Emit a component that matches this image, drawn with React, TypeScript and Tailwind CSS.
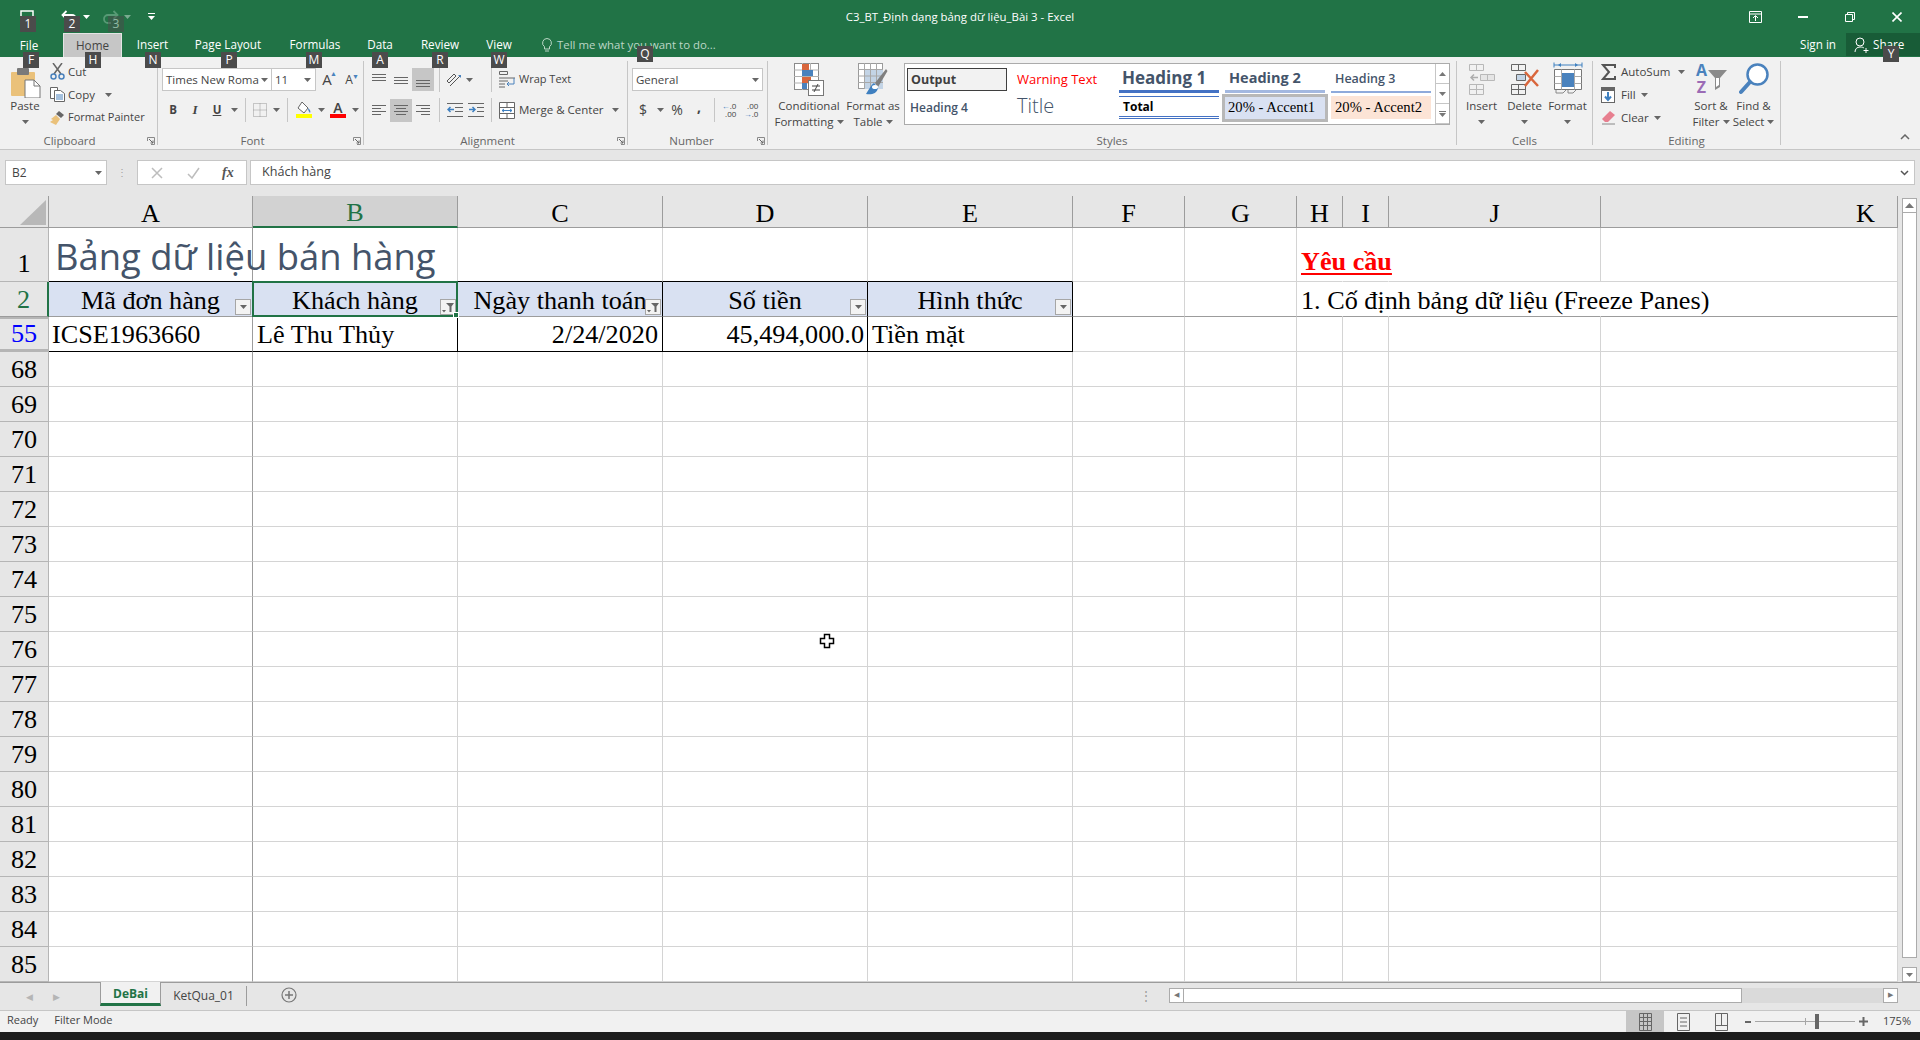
import React from 'react';

const serif = "font-['Liberation_Serif',serif]";

const tabs = [
  { label: 'File', cls: 'w-[58px] pt-[1px]' },
  { label: 'Home', cls: 'w-[59px] ml-[5px] bg-[#c6c6c6] text-[#444] border-t border-x border-[#e4e4e4]' },
  { label: 'Insert', cls: 'w-[61px]' },
  { label: 'Page Layout', cls: 'w-[90px]' },
  { label: 'Formulas', cls: 'w-[84px]' },
  { label: 'Data', cls: 'w-[46px]' },
  { label: 'Review', cls: 'w-[74px]' },
  { label: 'View', cls: 'w-[44px]' },
];

const keytips = [
  { t: '1', cls: 'left-[20px] top-[16px]' },
  { t: '2', cls: 'left-[64px] top-[16px]' },
  { t: '3', cls: 'left-[108px] top-[16px] opacity-50' },
  { t: 'F', cls: 'left-[23px] top-[52px]' },
  { t: 'H', cls: 'left-[85px] top-[52px]' },
  { t: 'N', cls: 'left-[145px] top-[52px]' },
  { t: 'P', cls: 'left-[221px] top-[52px]' },
  { t: 'M', cls: 'left-[306px] top-[52px]' },
  { t: 'A', cls: 'left-[372px] top-[52px]' },
  { t: 'R', cls: 'left-[432px] top-[52px]' },
  { t: 'W', cls: 'left-[491px] top-[52px]' },
  { t: 'Q', cls: 'left-[637px] top-[46px]' },
  { t: 'Y', cls: 'left-[1883px] top-[46px]' },
];

const Caret = ({ color = '#666' }: { color?: string }) => (
  <svg width="7" height="4" viewBox="0 0 7 4" className="shrink-0">
    <path d="M0 0h7L3.5 4z" fill={color} />
  </svg>
);

const Launcher = () => (
  <svg width="8" height="8" viewBox="0 0 8 8" className="absolute right-[2px] bottom-[0px]">
    <path d="M.5 4V.5H7.5V7.5H4" fill="none" stroke="#8a8a8a" />
    <path d="M2 2l4 4M3.5 6H6V3.5" fill="none" stroke="#666" />
  </svg>
);

const Group = ({ w, label, labelCls = '', launcher, children }: { w: string; label: string; labelCls?: string; launcher?: boolean; children: React.ReactNode }) => (
  <div className={`${w} shrink-0 h-[84px] border-r border-[#c6c6c6] flex flex-col relative`}>
    <div className="h-[73px] shrink-0">{children}</div>
    <div className={`text-center text-[11.5px] leading-[13px] text-[#666] ${labelCls}`}>{label}</div>
    {launcher && <Launcher />}
  </div>
);

const Slot = ({ w, on, children }: { w: string; on?: boolean; children?: React.ReactNode }) => (
  <div className={`${w} h-[23px] shrink-0 flex items-center justify-center ${on ? 'bg-[#c6c6c6]' : ''}`}>{children}</div>
);

const Sep = () => <div className="w-px h-[24px] bg-[#c6c6c6]" />;

const AlignIcon = ({ rows, y }: { rows: [number, number][]; y: number }) => (
  <svg width="14" height="14" viewBox="0 0 14 14">
    {rows.map(([x, w], i) => (
      <rect key={i} x={x} y={y + i * 3} width={w} height="1" fill="#666" />
    ))}
  </svg>
);

const BigBtn = ({ w, icon, l1, l2, caretLine = 2 }: { w: string; icon: React.ReactNode; l1: string; l2?: string; caretLine?: number }) => (
  <div className={`${w} shrink-0 flex flex-col items-center text-[#444] text-[11.5px]`}>
    <div className="h-[37px] flex items-end justify-center pb-[2px]">{icon}</div>
    <div className="h-[16px] leading-[16px] whitespace-nowrap">{l1}</div>
    <div className="h-[16px] leading-[16px] flex items-center gap-[3px] whitespace-nowrap">
      {l2}
      {caretLine === 2 && <Caret />}
    </div>
  </div>
);

const CondIcon = () => (
  <svg width="30" height="33" viewBox="0 0 30 33">
    <rect x=".5" y=".5" width="24" height="26" fill="#fff" stroke="#8a8a8a" />
    <path d="M8.5 0v27M16.5 0v27M0 7h25M0 13.5h25M0 20h25" stroke="#b0b0b0" />
    <rect x="8" y="1" width="7" height="6" fill="#d9663c" />
    <rect x="8" y="7" width="11" height="6" fill="#4a82bd" />
    <rect x="8" y="14" width="9" height="6" fill="#d9663c" />
    <rect x="8" y="20" width="5" height="6" fill="#4a82bd" />
    <rect x="14.5" y="17.5" width="15" height="15" fill="#fff" stroke="#777" />
    <path d="M18 23h8M18 27h8M24 21l-4 8" stroke="#444" fill="none" />
  </svg>
);

const TableIcon = () => (
  <svg width="30" height="33" viewBox="0 0 30 33">
    <rect x=".5" y=".5" width="24" height="25" fill="#fff" stroke="#9a9a9a" />
    <rect x="6" y="7" width="19" height="19" fill="#c3d4e6" />
    <path d="M6.5 0v26M12.5 0v26M18.5 0v26M0 6.5h25M0 13h25M0 19.5h25" stroke="#a8a8a8" />
    <path d="M17 20l11-14 1.5 2L20 24z" fill="#7f7f7f" />
    <path d="M16 20c-3 2-5 6-8 11 5 1 11 0 12-6z" fill="#3f80c0" />
    <ellipse cx="17" cy="24" rx="3" ry="2" fill="#fff" />
  </svg>
);

const InsertIcon = () => (
  <svg width="28" height="32" viewBox="0 0 28 32" opacity=".55">
    <path d="M1.500 .5h14v6h-14zM8.500 .5v6" fill="none" stroke="#8a8a8a" />
    <path d="M1.500 20.500h14v10h-14zM8.500 20.500v10M1.500 25.500h14" fill="none" stroke="#8a8a8a" />
    <path d="M12.500 10.500h14v6h-14zM19.500 10.500v6" fill="#ddd" stroke="#8a8a8a" />
    <path d="M10 13.500H3M6 10.500l-3 3 3 3" fill="none" stroke="#777" strokeWidth="1.500" />
  </svg>
);

const DeleteIcon = () => (
  <svg width="30" height="32" viewBox="0 0 30 32">
    <path d="M1.500 .5h14v6h-14zM8.500 .5v6M1.500 20.500h14v10h-14zM8.500 20.500v10M1.500 25.500h14" fill="none" stroke="#666" />
    <path d="M6.500 10.500h9v6h-9z" fill="#c3d4e6" stroke="#666" />
    <path d="M15 8l13 14M28 6L15 22" stroke="#d9663c" strokeWidth="2.500" fill="none" />
  </svg>
);

const FormatIcon = () => (
  <svg width="30" height="34" viewBox="0 0 30 34">
    <path d="M1 3h28M1 .5v5M29 .5v5" stroke="#3f80c0" fill="none" />
    <path d="M5 3l3-2v4zM25 3l-3-2v4z" fill="#3f80c0" />
    <path d="M1.500 7.500h27v20h-27z" fill="#fff" stroke="#777" />
    <path d="M8.500 7.500v20M21.500 7.500v20M1.500 14.500h27M1.500 21.500h27" stroke="#aaa" fill="none" />
    <rect x="9" y="11" width="12" height="14" fill="#4a82bd" />
    <path d="M3 28v3h7l3-3M15 28v3h5l3-3" fill="none" stroke="#888" />
  </svg>
);

const SortIcon = () => (
  <div className="flex items-center w-[32px] h-[34px]">
    <div className="w-[13px] flex flex-col items-center text-[16px] leading-[17px] font-bold">
      <span className="text-[#4a82bd]">A</span>
      <span className="text-[#9b6bb5]">Z</span>
    </div>
    <svg width="19" height="22" viewBox="0 0 19 22" className="mt-[2px]">
      <path d="M0 1h19l-7 8v9l-5 3V9z" fill="#8a8a8a" />
      <path d="M8 9v9l3-2V9z" fill="#fff" />
    </svg>
  </div>
);

const FindIcon = () => (
  <svg width="30" height="34" viewBox="0 0 30 34">
    <circle cx="18.500" cy="12.500" r="10" fill="#fff" stroke="#4a82bd" strokeWidth="2.500" />
    <path d="M11 20L2 30" stroke="#4a82bd" strokeWidth="4" strokeLinecap="round" />
  </svg>
);

const StyleCell = ({ cls, children }: { cls: string; children: React.ReactNode }) => (
  <div className={`w-[100px] whitespace-nowrap ${cls}`}>{children}</div>
);

const StyleRow = ({ cls = 'h-[30px]', children }: { cls?: string; children: React.ReactNode }) => (
  <div className={`${cls} flex gap-[6px] items-center`}>{children}</div>
);

const Ribbon = () => (
  <div className="h-[93px] bg-[#f1f1f1] border-b border-[#c6c6c6] pt-[4px] flex text-[#444] text-[11.5px]">
    <Group w="w-[158px]" label="Clipboard" labelCls="pr-[18px]" launcher>
      <div className="flex">
        <div className="w-[50px] flex flex-col items-center">
          <div className="h-[37px] flex items-end pl-[1px]">
            <svg width="30" height="30" viewBox="0 0 30 30">
              <rect x="0" y="4" width="24" height="24" rx="1" fill="#eac17a" />
              <rect x="6" y="0" width="12" height="7" rx="1" fill="#7a7a7a" />
              <path d="M14 12h9l6 6v12H14z" fill="#fff" stroke="#777" />
              <path d="M23 12v6h6" fill="none" stroke="#777" />
            </svg>
          </div>
          <div className="h-[16px] mt-[0px] leading-[16px]">Paste</div>
          <div className="h-[16px] flex items-center"><Caret /></div>
        </div>
        <div className="flex flex-col">
          <div className="h-[23px] mt-[-1px] flex items-center gap-[3px]">
            <svg width="15" height="17" viewBox="0 0 15 17">
              <path d="M3 0l8 11M12 0L4 11" stroke="#666" strokeWidth="1.500" />
              <circle cx="3.500" cy="13.500" r="2.500" fill="none" stroke="#4a82bd" strokeWidth="1.500" />
              <circle cx="11.500" cy="13.500" r="2.500" fill="none" stroke="#4a82bd" strokeWidth="1.500" />
            </svg>
            Cut
          </div>
          <div className="h-[23px] flex items-center gap-[3px]">
            <svg width="15" height="15" viewBox="0 0 15 15">
              <path d="M.5.5h7l0 11H.5z" fill="#fff" stroke="#666" />
              <path d="M4.500 3.500h6l4 3v8h-10z" fill="#fff" stroke="#666" />
              <path d="M6 8h7M6 10h7M6 12h7" stroke="#4a82bd" />
            </svg>
            <span>Copy</span>
            <span className="ml-[7px]"><Caret /></span>
          </div>
          <div className="h-[23px] flex items-center gap-[3px] whitespace-nowrap text-[11px]">
            <svg width="15" height="16" viewBox="0 0 15 16">
              <path d="M9 1l5 4-3 3-5-4z" fill="#666" />
              <path d="M6 5l4 4-4 6-6-3 3-2-2-1z" fill="#eac17a" />
            </svg>
            Format Painter
          </div>
        </div>
      </div>
    </Group>

    <Group w="w-[206px]" label="Font" labelCls="pr-[16px]" launcher>
      <div className="pt-[7px] pl-[4px]">
        <div className="flex items-center h-[23px]">
          <div className="w-[110px] h-[23px] bg-white border border-[#c6c6c6] flex items-center justify-between px-[3px] text-[11.5px] whitespace-nowrap overflow-hidden">
            Times New Roma<Caret />
          </div>
          <div className="w-[44px] h-[23px] bg-white border border-l-0 border-[#c6c6c6] flex items-center justify-between px-[3px] pr-[4px]">
            11<Caret />
          </div>
          <div className="w-[22px] text-center text-[15px] relative">
            A<span className="text-[#4a82bd] text-[7px] absolute top-[1px] right-[1px]">▲</span>
          </div>
          <div className="w-[22px] text-center text-[12px] relative">
            A<span className="text-[#4a82bd] text-[7px] absolute top-[1px] right-[1px]">▼</span>
          </div>
        </div>
        <div className="flex items-center mt-[7px]">
          <Slot w="w-[22px]"><b className="font-bold">B</b></Slot>
          <Slot w="w-[22px]"><i className={`${serif} text-[13px] font-bold`}>I</i></Slot>
          <Slot w="w-[22px]"><b className="underline font-bold">U</b></Slot>
          <Slot w="w-[12px]"><Caret /></Slot>
          <Slot w="w-[10px]"><Sep /></Slot>
          <Slot w="w-[20px]">
            <svg width="14" height="14" viewBox="0 0 14 14">
              <path d="M.5.5h13v13H.5zM7 .5v13M.5 7h13" fill="none" stroke="#999" strokeDasharray="1 1" />
            </svg>
          </Slot>
          <Slot w="w-[12px]"><Caret /></Slot>
          <Slot w="w-[10px]"><Sep /></Slot>
          <Slot w="w-[24px]">
            <svg width="16" height="17" viewBox="0 0 16 17">
              <path d="M6 1l6 6-4 5-6-5z" fill="#fff" stroke="#666" />
              <path d="M12 7c2 2 3 3 2 5-1-1-2-3-2-5z" fill="#4a82bd" />
              <rect y="13" width="16" height="4" fill="#ffff00" />
            </svg>
          </Slot>
          <Slot w="w-[10px]"><Caret /></Slot>
          <Slot w="w-[24px]">
            <div className="flex flex-col items-center leading-[13px] font-semibold text-[14px]">
              A<div className="w-[16px] h-[4px] bg-[#ff0000]" />
            </div>
          </Slot>
          <Slot w="w-[10px]"><Caret /></Slot>
        </div>
      </div>
    </Group>

    <Group w="w-[264px]" label="Alignment" labelCls="pr-[16px]" launcher>
      <div className="pt-[7px] pl-[4px]">
        <div className="flex items-center h-[23px]">
          <Slot w="w-[22px]"><AlignIcon rows={[[0, 14], [0, 14], [0, 14]]} y={1} /></Slot>
          <Slot w="w-[22px]"><AlignIcon rows={[[0, 14], [0, 14], [0, 14]]} y={4} /></Slot>
          <Slot w="w-[22px]" on><AlignIcon rows={[[0, 14], [0, 14], [0, 14]]} y={7} /></Slot>
          <Slot w="w-[10px]"><Sep /></Slot>
          <Slot w="w-[20px]">
            <svg width="16" height="14" viewBox="0 0 16 14">
              <path d="M1 8l7-7 2 2-7 7zM4 13L14 3" fill="none" stroke="#555" />
              <path d="M12 2h3v3z" fill="#4a82bd" />
            </svg>
          </Slot>
          <Slot w="w-[10px]"><Caret /></Slot>
          <div className="ml-[17px] mr-[7px]"><Sep /></div>
          <svg width="16" height="18" viewBox="0 0 16 18" className="shrink-0">
            <path d="M.5.5h8v3h-8zM0 7h16M0 10h9M0 13h6M0 16h6" fill="none" stroke="#666" />
            <path d="M15 7v6H8M10 11l-2 2 2 2" fill="none" stroke="#4a82bd" />
          </svg>
          <span className="ml-[4px] whitespace-nowrap text-[11px]">Wrap Text</span>
        </div>
        <div className="flex items-center mt-[7px]">
          <Slot w="w-[22px]"><AlignIcon rows={[[0, 14], [0, 9], [0, 14], [0, 9]]} y={2} /></Slot>
          <Slot w="w-[22px]" on><AlignIcon rows={[[0, 14], [2, 10], [0, 14], [2, 10]]} y={2} /></Slot>
          <Slot w="w-[22px]"><AlignIcon rows={[[0, 14], [5, 9], [0, 14], [5, 9]]} y={2} /></Slot>
          <Slot w="w-[10px]"><Sep /></Slot>
          <Slot w="w-[21px]">
            <svg width="16" height="14" viewBox="0 0 16 14">
              <path d="M0 .5h16M8 4.500h8M8 8.500h8M0 13.500h16" stroke="#666" />
              <path d="M7 6.500H1M3.500 4L1 6.500 3.500 9" fill="none" stroke="#3f80c0" strokeWidth="1.500" />
            </svg>
          </Slot>
          <Slot w="w-[22px]">
            <svg width="16" height="14" viewBox="0 0 16 14">
              <path d="M0 .5h16M9 4.500h7M9 8.500h7M0 13.500h16" stroke="#666" />
              <path d="M1 6.500h6M4.500 4L7 6.500 4.500 9" fill="none" stroke="#3f80c0" strokeWidth="1.500" />
            </svg>
          </Slot>
          <div className="ml-[4px] mr-[7px]"><Sep /></div>
          <svg width="16" height="17" viewBox="0 0 16 17" className="shrink-0">
            <path d="M.5.5h15v16H.5zM.5 5.500h15M.5 11.500h15M8 .5v5M8 11.500v5" fill="#fff" stroke="#666" />
            <path d="M3 8.500h10M5 7L3 8.500 5 10M11 7l2 1.500L11 10" fill="none" stroke="#3f80c0" />
          </svg>
          <span className="ml-[4px] whitespace-nowrap">Merge &amp; Center</span>
          <span className="ml-[8px]"><Caret /></span>
        </div>
      </div>
    </Group>

    <Group w="w-[140px]" label="Number" labelCls="pr-[12px]" launcher>
      <div className="pt-[7px] pl-[4px]">
        <div className="w-[131px] h-[23px] bg-white border border-[#c6c6c6] flex items-center justify-between px-[3px]">
          General<Caret />
        </div>
        <div className="flex items-center mt-[7px] text-[14px]">
          <Slot w="w-[22px]">$</Slot>
          <Slot w="w-[12px]"><Caret /></Slot>
          <Slot w="w-[22px]">%</Slot>
          <Slot w="w-[22px]"><b className="-mt-[7px]">,</b></Slot>
          <Slot w="w-[8px]"><Sep /></Slot>
          <Slot w="w-[22px]">
            <div className="flex flex-col text-[8px] leading-[8px] items-end">
              <span><span className="text-[#3f80c0]">←</span>.0</span><span>.00</span>
            </div>
          </Slot>
          <Slot w="w-[22px]">
            <div className="flex flex-col text-[8px] leading-[8px] items-end">
              <span>.00</span><span><span className="text-[#3f80c0]">→</span>.0</span>
            </div>
          </Slot>
        </div>
      </div>
    </Group>

    <Group w="w-[689px]" label="Styles">
      <div className="flex pl-[8px]">
        <BigBtn w="w-[66px]" icon={<CondIcon />} l1="Conditional" l2="Formatting" />
        <BigBtn w="w-[62px]" icon={<TableIcon />} l1="Format as" l2="Table" />
        <div className="mt-[2px] w-[546px] h-[62px] bg-white border border-[#ababab] flex pl-[2px]">
          <div className="w-[528px] shrink-0">
            <StyleRow>
              <StyleCell cls="h-[23px] mt-[1px] border border-[#3f3f3f] bg-[#f2f2f2] px-[3px] text-[12.5px] leading-[21px] font-bold text-[#3f3f3f]">Output</StyleCell>
              <StyleCell cls="px-[4px] text-[13px] text-[#ff0000] mt-[1px]">Warning Text</StyleCell>
              <StyleCell cls="h-[27px] border-b-[3px] border-[#4472c4] text-[17px] leading-[24px] font-bold text-[#44546a] px-[3px]">Heading 1</StyleCell>
              <StyleCell cls="h-[27px] border-b-[3px] border-[#a3b8e0] text-[14.5px] leading-[24px] font-bold text-[#44546a] px-[4px]">Heading 2</StyleCell>
              <StyleCell cls="h-[27px] border-b-[2px] border-[#8eaadb] text-[12.5px] leading-[26px] font-semibold text-[#44546a] px-[4px]">Heading 3</StyleCell>
            </StyleRow>
            <StyleRow cls="h-[29px] -mt-[1px]">
              <StyleCell cls="px-[3px] text-[12px] font-semibold text-[#44546a]">Heading 4</StyleCell>
              <StyleCell cls="px-[4px] text-[20px] font-light leading-[26px] -mt-[3px] text-[#44546a]">Title</StyleCell>
              <StyleCell cls="h-[23px] border-t border-b-[3px] border-b-[#4472c4] [border-bottom-style:double] border-t-[#4472c4] px-[4px] text-[12px] font-bold text-black leading-[20px]">Total</StyleCell>
              <div className={`w-[106px] -mx-[3px] h-[28px] border-[3px] border-[#b8b8b8] bg-[#d9e1f2] text-[14.670px] text-black pl-[3px] leading-[21px] whitespace-nowrap ${serif}`}>20% - Accent1</div>
              <StyleCell cls={`h-[23px] bg-[#fce4d6] px-[4px] text-[14.670px] text-black leading-[22px] ${serif}`}>20% - Accent2</StyleCell>
            </StyleRow>
          </div>
          <div className="w-[14px] shrink-0 flex flex-col">
            {[0, 1, 2].map((i) => (
              <div key={i} className="h-[20px] border-l border-b border-[#c6c6c6] flex flex-col items-center justify-center gap-[1px]">
                {i === 0 ? <svg width="7" height="4" viewBox="0 0 7 4"><path d="M3.500 0L7 4H0z" fill="#777" /></svg> : <Caret color="#777" />}
                {i === 2 && <div className="w-[7px] h-px bg-[#777] -order-1" />}
              </div>
            ))}
          </div>
        </div>
      </div>
    </Group>

    <Group w="w-[136px]" label="Cells">
      <div className="flex pl-[3px]">
        {[
          { l: 'Insert', i: <InsertIcon /> },
          { l: 'Delete', i: <DeleteIcon /> },
          { l: 'Format', i: <FormatIcon /> },
        ].map((b) => (
          <BigBtn key={b.l} w="w-[43px]" icon={b.i} l1={b.l} />
        ))}
      </div>
    </Group>

    <Group w="w-[188px]" label="Editing">
      <div className="flex pl-[8px]">
        <div className="w-[89px] shrink-0 flex flex-col -mt-[1px]">
          <div className="h-[23px] flex items-center gap-[5px]">
            <svg width="15" height="16" viewBox="0 0 15 16"><path d="M14 4V1H2l6 7-6 7h12v-3" fill="none" stroke="#555" strokeWidth="2" /></svg>
            AutoSum
            <span className="ml-[3px]"><Caret /></span>
          </div>
          <div className="h-[23px] flex items-center gap-[5px]">
            <svg width="15" height="16" viewBox="0 0 15 16">
              <rect x=".5" y=".5" width="13" height="15" fill="#fff" stroke="#666" />
              <rect x="1" y="1" width="12" height="3" fill="#666" />
              <path d="M7 5v8M4 9.500L7 13l3-3.500" fill="none" stroke="#3f80c0" strokeWidth="2" />
            </svg>
            Fill<Caret />
          </div>
          <div className="h-[23px] flex items-center gap-[5px]">
            <svg width="15" height="15" viewBox="0 0 15 15">
              <path d="M9 1l5 4-7 7H4L1 9z" fill="#e77f8f" />
              <path d="M1 14h13" stroke="#888" />
            </svg>
            Clear<Caret />
          </div>
        </div>
        <BigBtn w="w-[42px]" icon={<SortIcon />} l1="Sort &" l2="Filter" />
        <BigBtn w="w-[43px]" icon={<FindIcon />} l1="Find &" l2="Select" />
      </div>
    </Group>

    <div className="flex-1 flex items-end justify-end pr-[10px] pb-[5px] h-[84px]">
      <svg width="10" height="6" viewBox="0 0 10 6"><path d="M1 5l4-4 4 4" fill="none" stroke="#666" strokeWidth="1.500" /></svg>
    </div>
  </div>
);

const TitleBar = () => (
  <div className="h-[57px] bg-[#217346] text-white relative">
    <div className="h-[33px] grid grid-cols-[1fr_auto_1fr] items-center">
      <div className="flex items-center pl-[20px]">
        <svg width="14" height="14" viewBox="0 0 14 14"><path d="M1 1h12v12H1z" fill="none" stroke="#fff" strokeWidth="1.500" /></svg>
        <svg width="18" height="14" viewBox="0 0 18 14" className="ml-[27px]">
          <path d="M2 5h9a4 4 0 010 8H8M5.500 1L1.500 5l4 4" fill="none" stroke="#fff" strokeWidth="1.800" />
        </svg>
        <span className="ml-[4px]"><Caret color="#fff" /></span>
        <svg width="18" height="14" viewBox="0 0 18 14" className="ml-[11px] opacity-40">
          <path d="M16 5H7a4 4 0 000 8h3M12.500 1l4 4-4 4" fill="none" stroke="#a9d4bb" strokeWidth="1.800" />
        </svg>
        <span className="ml-[5px] opacity-40"><Caret color="#fff" /></span>
        <svg width="7" height="7" viewBox="0 0 7 7" className="ml-[17px]"><path d="M0 0h7v1H0zM0 3h7L3.500 7z" fill="#fff" /></svg>
      </div>
      <div className="text-[11.4px] whitespace-nowrap">C3_BT_Định dạng bảng dữ liệu_Bài 3 - Excel</div>
      <div className="flex items-center justify-end">
        <svg width="13" height="12" viewBox="0 0 13 12"><path d="M.5.5h12v11H.5zM.5 3h12M6.500 10V5M4 7l2.500-2.500L9 7" fill="none" stroke="#fff" /></svg>
        <svg width="10" height="2" viewBox="0 0 10 2" className="ml-[36px]"><rect width="10" height="2" fill="#fff" /></svg>
        <svg width="10" height="10" viewBox="0 0 10 10" className="ml-[37px]"><path d="M.5 2.500h7v7h-7zM2.500 2.500v-2h7v7h-2" fill="none" stroke="#fff" /></svg>
        <svg width="10" height="10" viewBox="0 0 10 10" className="ml-[37px] mr-[18px]"><path d="M.5.5l9 9M9.500.5l-9 9" stroke="#fff" strokeWidth="1.600" /></svg>
      </div>
    </div>
    <div className="h-[24px] flex items-stretch text-[11.700px]">
      {tabs.map((t) => (
        <div key={t.label} className={`${t.cls} flex items-center justify-center whitespace-nowrap`}>{t.label}</div>
      ))}
      <div className="flex items-center ml-[20px] text-[#bcd7c7] text-[11.4px]">
        <svg width="10" height="15" viewBox="0 0 10 15" className="mr-[5px] ml-[1px]">
          <path d="M5 .5a4.500 4.500 0 012.500 8.200V11h-5V8.700A4.500 4.500 0 015 .5zM3 13h4" fill="none" stroke="#bcd7c7" />
        </svg>
        Tell me what you want to do...
      </div>
      <div className="flex-1" />
      <div className="flex items-center mr-[10px]">Sign in</div>
      <div className="w-[74px] bg-[#185c37] flex items-center pl-[8px] gap-[4px] mb-[1px]">
        <svg width="15" height="16" viewBox="0 0 15 16"><path d="M6 1a3.500 3.500 0 110 8 3.500 3.500 0 010-8zM1 15c0-3 2-5 5-5s3 .5 4 1M9.500 13.500h5M12 11v5" fill="none" stroke="#fff" /></svg>
        Share
      </div>
    </div>
  </div>
);

const FormulaBar = () => (
  <div className="h-[46px] bg-[#e6e6e6] pt-[10px] flex items-start text-[12px] text-[#444]">
    <div className="ml-[5px] w-[102px] h-[25px] bg-white border border-[#c6c6c6] flex items-center justify-between pl-[6px] pr-[4px]">
      B2<Caret />
    </div>
    <div className="w-[30px] h-[25px] flex items-center justify-center text-[#a0a0a0] text-[10px]">⋮</div>
    <div className="w-[110px] h-[25px] bg-white border border-[#c6c6c6] flex items-center">
      <svg width="12" height="12" viewBox="0 0 12 12" className="ml-[13px]"><path d="M1 1l10 10M11 1L1 11" stroke="#bdbdbd" strokeWidth="1.500" /></svg>
      <svg width="13" height="12" viewBox="0 0 13 12" className="ml-[24px]"><path d="M1 7l4 4 7-10" fill="none" stroke="#bdbdbd" strokeWidth="1.500" /></svg>
      <i className={`ml-[22px] text-[14px] font-bold text-[#555] ${serif}`}>fx</i>
    </div>
    <div className="ml-[3px] w-[1665px] h-[25px] bg-white border border-[#c6c6c6] flex items-center justify-between pl-[11px] pr-[5px] text-[12.6px]">
      Khách hàng
      <svg width="9" height="6" viewBox="0 0 9 6"><path d="M1 1l3.500 3.500L8 1" fill="none" stroke="#555" strokeWidth="1.500" /></svg>
    </div>
  </div>
);

const cols = ['A', 'B', 'C', 'D', 'E', 'F', 'G', 'H', 'I', 'J', 'K'];

const FilterBtn = ({ active }: { active?: boolean }) => (
  <div className="absolute right-[1px] bottom-[1px] w-[16px] h-[16px] bg-[#f3f3f3] border border-[#a6a6a6] flex items-center justify-center z-10">
    {active ? (
      <svg width="12" height="11" viewBox="0 0 12 11">
        <path d="M4 1h8L9.500 4.500V10H7.500V4.500z" fill="#666" />
        <path d="M0 8h4L2 10.500z" fill="#666" />
      </svg>
    ) : (
      <Caret color="#666" />
    )}
  </div>
);

const RowHead = ({ n, cls = 'leading-[33px]' }: { n: number; cls?: string }) => (
  <div className={`bg-[#e6e6e6] border-r border-b border-[#b5b5b5] flex items-end justify-center ${cls}`}>{n}</div>
);

const Cell = ({ cls = '', children }: { cls?: string; children?: React.ReactNode }) => (
  <div className={`relative border-r border-b border-[#d4d4d4] flex items-end whitespace-nowrap leading-[31px] ${cls}`}>{children}</div>
);

const blankRows = Array.from({ length: 18 }, (_, i) => 68 + i);

const Sheet = () => (
  <div className={`flex h-[786px] bg-[#e6e6e6] text-[26.200px] text-black ${serif}`}>
    <div className="w-[1898px] bg-white grid grid-cols-[49px_204px_205px_205px_205px_205px_112px_112px_46px_46px_212px_297px] grid-rows-[32px_54px_35px_35px_repeat(18,35px)]">
      <div className="bg-[#e6e6e6] border-r border-b border-[#9c9c9c] flex items-end justify-end p-[2px]">
        <svg width="26" height="25" viewBox="0 0 26 25"><path d="M26 0v25H0z" fill="#b8b8b8" /></svg>
      </div>
      {cols.map((c) => (
        <div
          key={c}
          className={`flex items-center pt-[4px] border-r border-b border-[#9c9c9c] ${
            c === 'K' ? 'justify-end pr-[22px]' : 'justify-center'
          } ${c === 'B' ? 'bg-[#d2d2d2] text-[#217346] border-b-2 border-b-[#217346]' : 'bg-[#e6e6e6]'}`}
        >
          {c}
        </div>
      ))}

      <RowHead n={1} cls="leading-[35px]" />
      <Cell cls="border-b-black border-r-[#9c9c9c]">
        <span className="pl-[6px] font-['Open_Sans',sans-serif] font-normal text-[36.400px] leading-[49px] text-[#44546a] relative">Bảng dữ liệu bán hàng</span>
      </Cell>
      <Cell cls="border-b-black" />
      <Cell cls="border-b-black" />
      <Cell cls="border-b-black" />
      <Cell cls="border-b-black" />
      <Cell />
      <Cell />
      <Cell cls="border-r-transparent">
        <span className="pl-[4px] font-bold text-[#ff0000] underline decoration-2 underline-offset-[3px] leading-[38px]">Yêu cầu</span>
      </Cell>
      <Cell cls="border-r-transparent" />
      <Cell />
      <Cell />

      <RowHead n={2} cls="leading-[33px] bg-[#d2d2d2] text-[#217346] border-r-2 border-r-[#217346] border-b-[#9c9c9c]" />
      <Cell cls="bg-[#d9e1f2] justify-center border-b-[#9c9c9c] border-r-[#9c9c9c]">
        Mã đơn hàng<FilterBtn />
      </Cell>
      <Cell cls="bg-[#d9e1f2] justify-center border-b-[#9c9c9c]">
        Khách hàng<FilterBtn active />
        <div className="absolute -left-px -top-px -right-px -bottom-px border-2 border-[#217346] pointer-events-none z-20">
          <div className="absolute -right-[3px] -bottom-[3px] w-[6px] h-[6px] bg-[#217346] border border-white" />
        </div>
      </Cell>
      <Cell cls="bg-[#d9e1f2] justify-center border-b-[#9c9c9c] border-r-black">
        Ngày thanh toán<FilterBtn active />
      </Cell>
      <Cell cls="bg-[#d9e1f2] justify-center border-b-[#9c9c9c] border-r-black">
        Số tiền<FilterBtn />
      </Cell>
      <Cell cls="bg-[#d9e1f2] justify-center border-b-[#9c9c9c] border-r-black">
        Hình thức<FilterBtn />
      </Cell>
      <Cell cls="border-b-[#9c9c9c]" />
      <Cell cls="border-b-[#9c9c9c]" />
      <Cell cls="border-b-[#9c9c9c] border-r-transparent">
        <span className="pl-[4px]">1. Cố định bảng dữ liệu (Freeze Panes)</span>
      </Cell>
      <Cell cls="border-b-[#9c9c9c] border-r-transparent" />
      <Cell cls="border-b-[#9c9c9c] border-r-transparent" />
      <Cell cls="border-b-[#9c9c9c]" />

      <RowHead n={55} cls="leading-[30px] text-[#0000ff] border-t-2 border-t-[#b5b5b5] border-b-[3px] border-b-[#b5b5b5]" />
      <Cell cls="border-b-black border-r-[#9c9c9c] pl-[3px] !leading-[32px]">ICSE1963660</Cell>
      <Cell cls="border-b-black border-r-black pl-[4px] !leading-[32px]">Lê Thu Thủy</Cell>
      <Cell cls="border-b-black border-r-black justify-end pr-[4px] !leading-[32px]">2/24/2020</Cell>
      <Cell cls="border-b-black border-r-black justify-end pr-[3px] !leading-[32px]">45,494,000.0</Cell>
      <Cell cls="border-b-black border-r-black pl-[4px] !leading-[32px]">Tiền mặt</Cell>
      <Cell />
      <Cell />
      <Cell />
      <Cell />
      <Cell />
      <Cell />

      {blankRows.map((n) => (
        <React.Fragment key={n}>
          <RowHead n={n} />
          {cols.map((c) => (
            <Cell key={c} cls={c === 'A' ? 'border-r-[#9c9c9c]' : ''} />
          ))}
        </React.Fragment>
      ))}
    </div>
    <div className="flex-1 pl-[4px] pr-[3px] pt-[2px] flex flex-col">
      <div className="h-[15px] bg-white border border-[#ababab] flex items-center justify-center">
        <svg width="9" height="5" viewBox="0 0 9 5"><path d="M4.500 0L9 5H0z" fill="#777" /></svg>
      </div>
      <div className="h-[745px] bg-white border-x border-b border-[#ababab]" />
      <div className="flex-1" />
      <div className="h-[15px] bg-white border border-[#ababab] flex items-center justify-center">
        <Caret color="#777" />
      </div>
    </div>
  </div>
);

const SheetTabs = () => (
  <div className="h-[28px] bg-[#e6e6e6] border-t border-[#9c9c9c] flex items-stretch text-[12px]">
    <div className="w-[100px] flex items-center text-[#b5b5b5] text-[9px]">
      <span className="ml-[26px]">◀</span>
      <span className="ml-[20px]">▶</span>
    </div>
    <div className="w-[61px] h-[24px] -mt-px pt-[2px] bg-[#f1f1f1] border-x border-[#9c9c9c] border-b-[3px] border-b-[#217346] flex items-center justify-center font-bold text-[#217346]">
      DeBai
    </div>
    <div className="w-[86px] h-[20px] mt-[3px] border-r border-[#9c9c9c] flex items-center justify-center text-[#444]">KetQua_01</div>
    <div className="w-[84px] flex items-center justify-center pb-[3px]">
      <svg width="16" height="16" viewBox="0 0 16 16">
        <circle cx="8" cy="8" r="7" fill="none" stroke="#777" strokeWidth="1.200" />
        <path d="M8 4v8M4 8h8" stroke="#777" strokeWidth="1.500" />
      </svg>
    </div>
    <div className="w-[821px] flex items-center justify-end text-[#999] pb-[2px]">⋮</div>
    <div className="ml-[17px] w-[729px] h-[15px] mt-[5px] flex bg-[#dadada]">
      <div className="w-[15px] bg-white border border-[#ababab] flex items-center justify-center text-[#777] text-[7px]">◀</div>
      <div className="w-[558px] bg-white border-y border-r border-[#ababab]" />
      <div className="flex-1" />
      <div className="w-[15px] bg-white border border-[#ababab] flex items-center justify-center text-[#777] text-[7px]">▶</div>
    </div>
  </div>
);

const StatusBar = () => (
  <div className="h-[22px] bg-[#f1f1f1] border-t border-[#c6c6c6] flex items-center text-[11px] text-[#444]">
    <span className="ml-[7px] -mt-[2px]">Ready</span>
    <span className="ml-[16px] -mt-[2px]">Filter Mode</span>
    <div className="flex-1" />
    <div className="w-[38px] h-[21px] bg-[#c6c6c6] flex items-center justify-center">
      <svg width="13" height="18" viewBox="0 0 13 18"><path d="M.5.5h12v17H.5zM4.500.5v17M8.500.5v17M.5 4.500h12M.5 8.500h12M.5 12.500h12" fill="none" stroke="#666" /></svg>
    </div>
    <div className="w-[38px] flex items-center justify-center">
      <svg width="13" height="18" viewBox="0 0 13 18"><path d="M.5.5h12v17H.5zM3 5h7M3 9h7M3 13h7" fill="none" stroke="#666" /></svg>
    </div>
    <div className="w-[38px] flex items-center justify-center">
      <svg width="13" height="18" viewBox="0 0 13 18"><path d="M.5.5h12v17H.5zM.5 12.500h12M6.500.5v12" fill="none" stroke="#666" /></svg>
    </div>
    <div className="w-[6px] h-[2px] ml-[5px] bg-[#666]" />
    <div className="ml-[4px] w-[100px] h-px bg-[#a6a6a6] relative">
      <div className="absolute left-[50px] -top-[3px] w-px h-[7px] bg-[#a6a6a6]" />
      <div className="absolute left-[60px] -top-[7px] w-[4px] h-[15px] bg-[#666]" />
    </div>
    <svg width="9" height="9" viewBox="0 0 9 9" className="ml-[4px]"><path d="M0 4.500h9M4.500 0v9" stroke="#666" strokeWidth="2" /></svg>
    <span className="ml-[15px] mr-[9px] text-[11px] -mt-[1px]">175%</span>
  </div>
);

export default function App() {
  return (
    <div className="relative w-[1920px] h-[1040px] overflow-hidden font-['Open_Sans',sans-serif] bg-[#1c1c1c]">
      <TitleBar />
      <Ribbon />
      <FormulaBar />
      <Sheet />
      <SheetTabs />
      <StatusBar />
      {keytips.map((k) => (
        <div
          key={k.t}
          className={`absolute ${k.cls} w-[16px] h-[16px] bg-[#4b4b4b] text-white text-[12px] leading-[16px] text-center z-30`}
        >
          {k.t}
        </div>
      ))}
      <svg width="16" height="16" viewBox="0 0 16 16" className="absolute left-[819px] top-[633px] z-30">
        <path d="M5.500 1.500h5v4h4v5h-4v4h-5v-4h-4v-5h4z" fill="#fff" stroke="#000" strokeWidth="1.500" />
      </svg>
    </div>
  );
}
